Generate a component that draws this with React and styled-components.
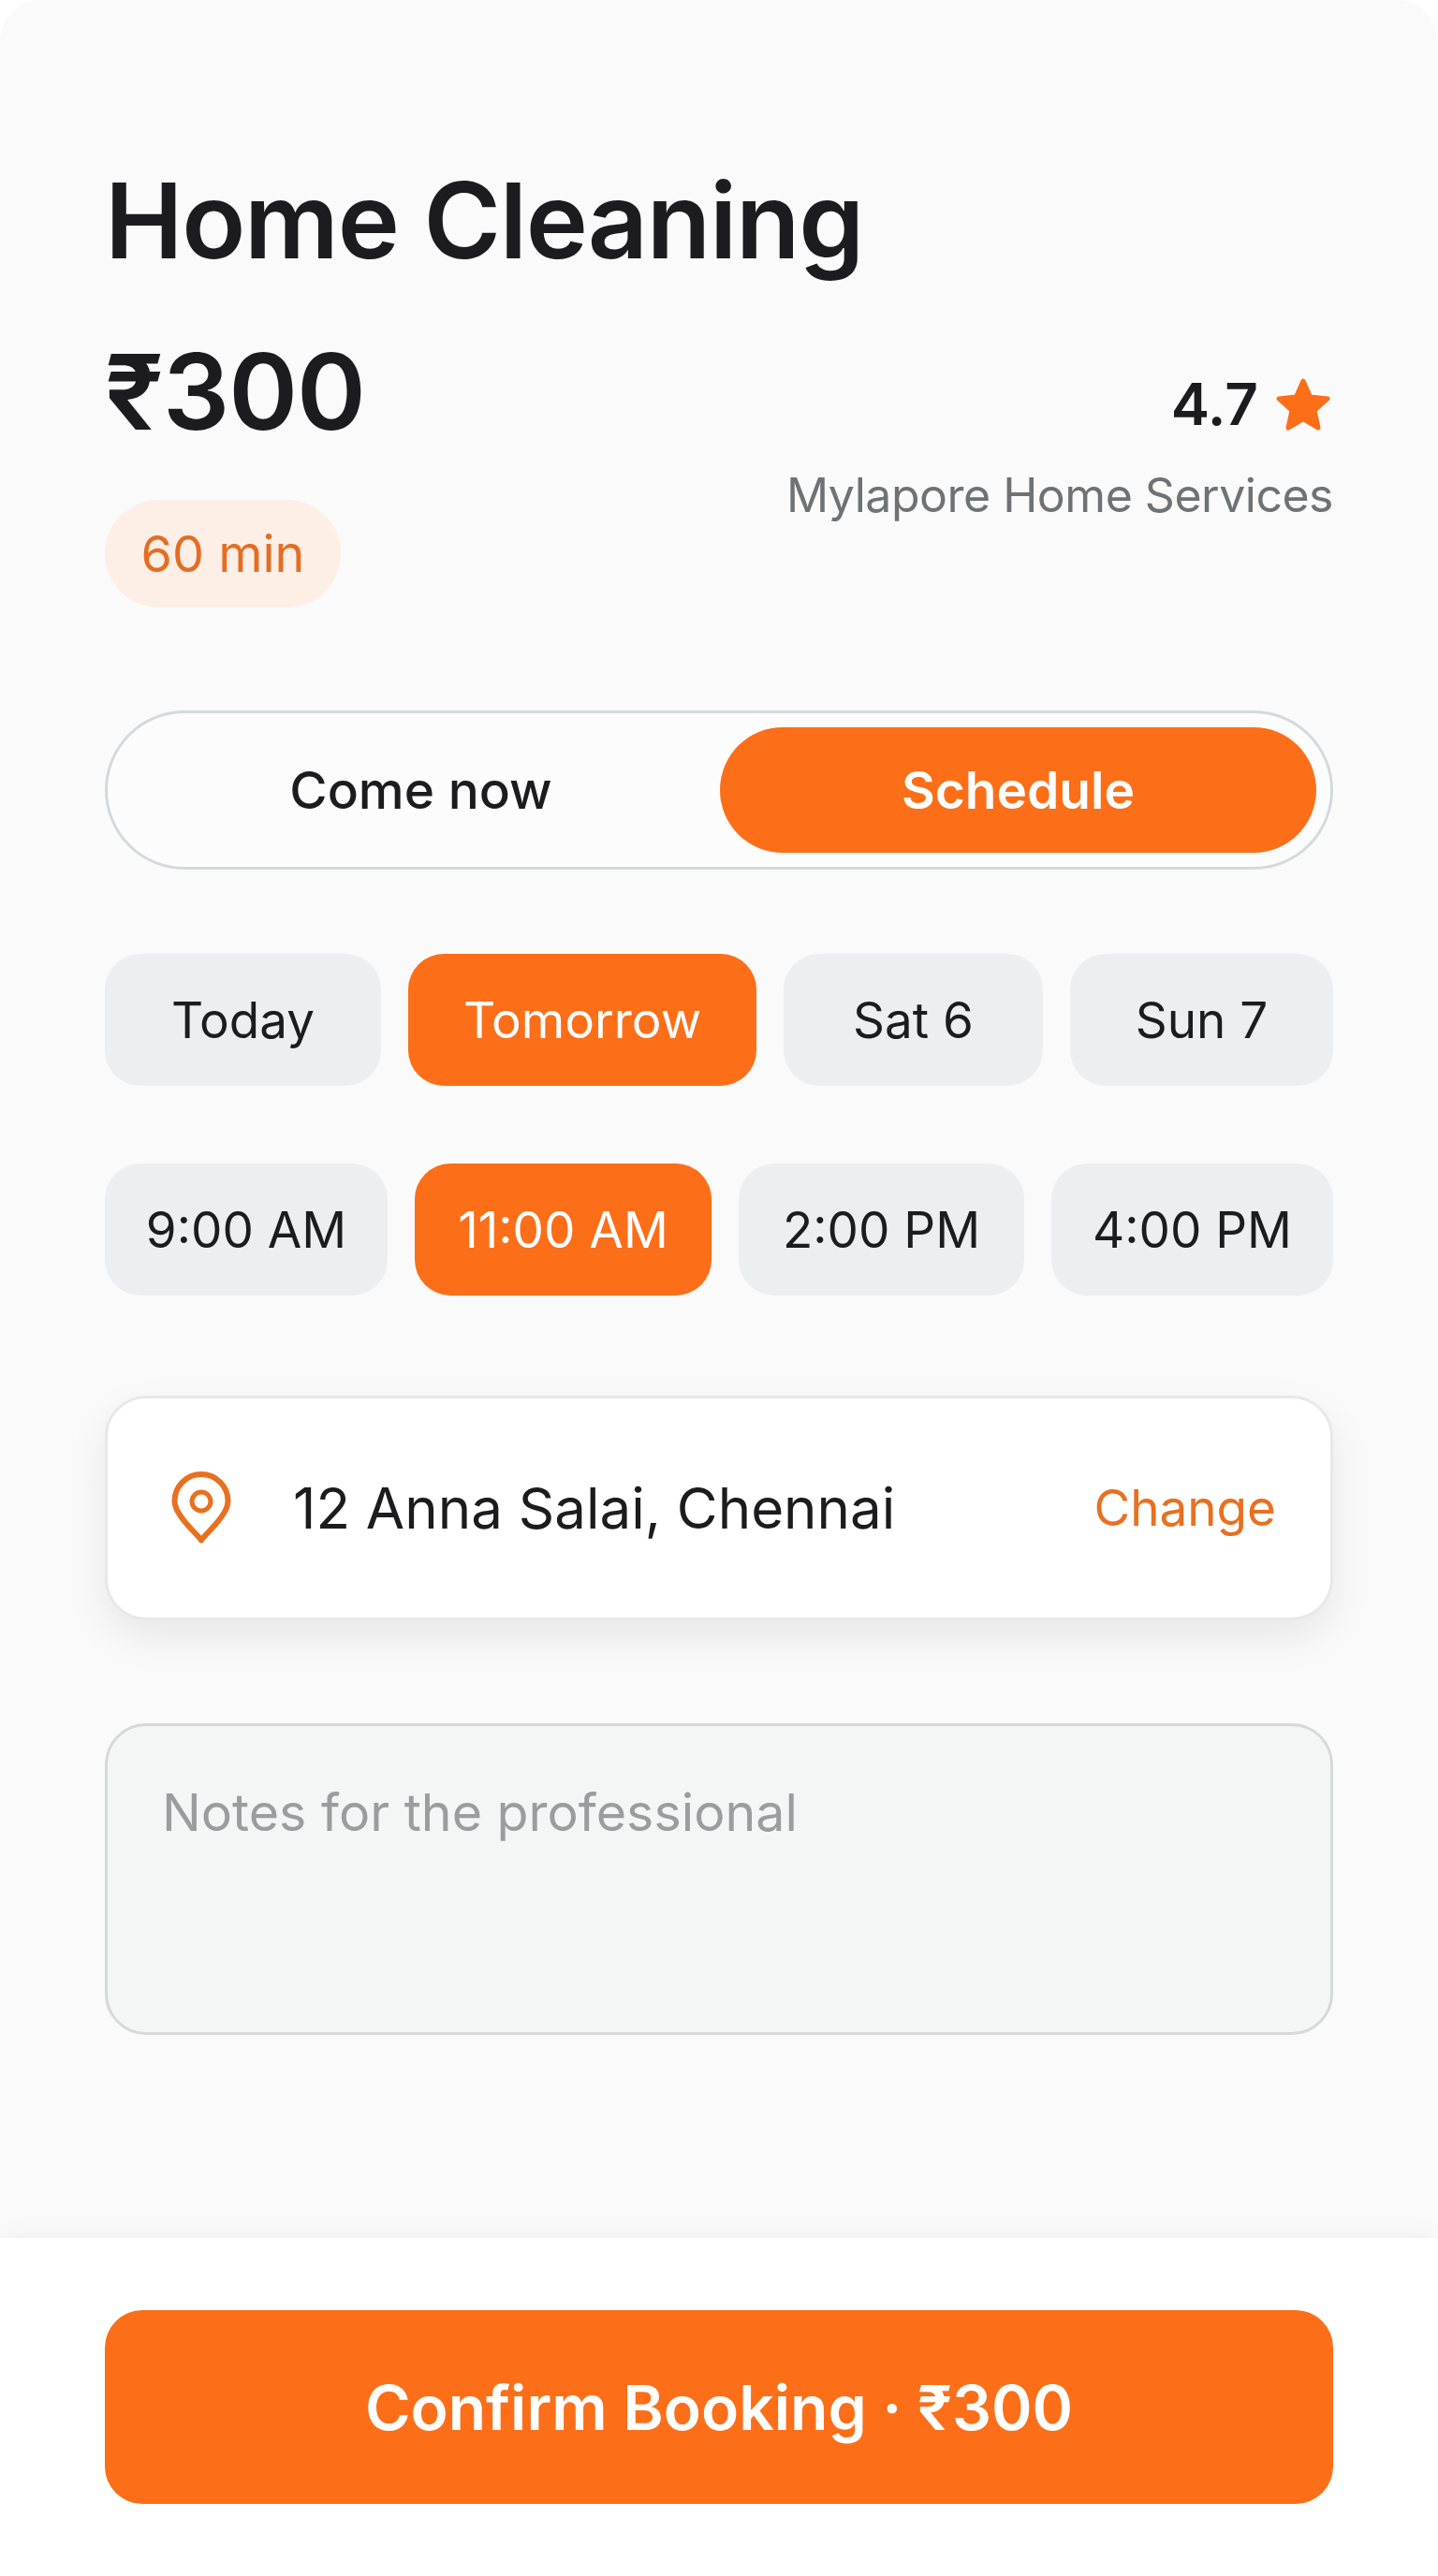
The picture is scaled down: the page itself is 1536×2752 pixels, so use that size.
import React from "react";
import styled, { createGlobalStyle } from "styled-components";

const orange = "#fc6e17";
const ink = "#1c1c1e";

const GlobalStyle = createGlobalStyle`
  html, body {
    margin: 0;
    padding: 0;
    background: #ffffff;
  }
  * {
    box-sizing: border-box;
  }
`;

const Screen = styled.div`
  width: 1536px;
  height: 2752px;
  display: flex;
  flex-direction: column;
  font-family: "Inter", "Liberation Sans", sans-serif;
  color: ${ink};
  background: #fafafa;
  border-radius: 44px 44px 0 0;
  overflow: hidden;
`;

const Main = styled.main`
  flex: 1;
  padding: 170px 112px 0;
  display: flex;
  flex-direction: column;
`;

const Title = styled.h1`
  margin: 0;
  font-size: 112px;
  line-height: 130px;
  font-weight: 600;
  letter-spacing: -1.3px;
`;

const Summary = styled.div`
  margin-top: 53px;
  display: flex;
  justify-content: space-between;
  align-items: flex-start;
`;

const PriceColumn = styled.div`
  display: flex;
  flex-direction: column;
  align-items: flex-start;
`;

const Price = styled.div`
  font-size: 112px;
  line-height: 130px;
  font-weight: 600;
  letter-spacing: -1px;
`;

const Duration = styled.span`
  margin-top: 51px;
  width: 252px;
  height: 115px;
  display: flex;
  align-items: center;
  justify-content: center;
  border-radius: 58px;
  background: #fdeee6;
  color: #e56d22;
  font-size: 54px;
`;

const ProviderColumn = styled.div`
  padding-top: 41px;
  display: flex;
  flex-direction: column;
  align-items: flex-end;
`;

const Rating = styled.div`
  padding-right: 2px;
  display: flex;
  align-items: center;
  gap: 18px;
  font-size: 62px;
  line-height: 76px;
  font-weight: 600;
`;

const Provider = styled.div`
  margin-top: 27px;
  font-size: 50px;
  line-height: 64px;
  letter-spacing: -0.5px;
  color: #6f7274;
`;

const Toggle = styled.div`
  margin-top: 110px;
  height: 170px;
  padding: 15px;
  display: grid;
  grid-template-columns: 1fr 637px;
  border: 3px solid #d5d9db;
  border-radius: 85px;
  background: #fcfcfc;
`;

const ToggleOption = styled.button`
  border: none;
  border-radius: 68px;
  font-family: inherit;
  font-size: 55px;
  font-weight: ${(p) => (p.$active ? 600 : 500)};
  color: ${(p) => (p.$active ? "#ffffff" : ink)};
  background: ${(p) => (p.$active ? orange : "transparent")};
`;

const ChipRow = styled.div`
  margin-top: ${(p) => p.$gap}px;
  display: grid;
  grid-template-columns: ${(p) => p.$columns};
  gap: 29px;
`;

const Chip = styled.button`
  height: 141px;
  border: none;
  border-radius: 38px;
  font-family: inherit;
  font-size: 53px;
  color: ${(p) => (p.$active ? "#ffffff" : ink)};
  background: ${(p) => (p.$active ? orange : "#eceef0")};
`;

const AddressCard = styled.div`
  margin-top: 107px;
  height: 240px;
  padding: 0 58px 0 68px;
  display: flex;
  align-items: center;
  background: #ffffff;
  border: 3px solid #e6e8e9;
  border-radius: 44px;
  box-shadow: 0 18px 44px rgba(0, 0, 0, 0.08);
`;

const Address = styled.div`
  margin-left: 66px;
  flex: 1;
  font-size: 60px;
`;

const ChangeLink = styled.span`
  font-size: 53px;
  color: #e8701f;
`;

const Notes = styled.div`
  margin-top: 110px;
  height: 333px;
  padding: 58px 58px 0;
  background: #f4f5f5;
  border: 3px solid #d6d8da;
  border-radius: 44px;
  font-size: 55.5px;
  line-height: 68px;
  color: #9a9c9e;
`;

const Footer = styled.footer`
  height: 361px;
  padding: 77px 112px 0;
  background: #ffffff;
  box-shadow: 0 0 24px rgba(0, 0, 0, 0.06);
`;

const ConfirmButton = styled.button`
  width: 100%;
  height: 207px;
  border: none;
  border-radius: 40px;
  font-family: inherit;
  font-size: 66px;
  font-weight: 600;
  color: #ffffff;
  background: ${orange};
`;

const StarIcon = () => (
  <svg width="60" height="58" viewBox="0 0 60 58" aria-hidden="true">
    <path
      d="M30 4 L37.5 21 L56 23 L42 35.5 L46 54 L30 44.5 L14 54 L18 35.5 L4 23 L22.5 21 Z"
      fill={orange}
      stroke={orange}
      strokeWidth="5"
      strokeLinejoin="round"
    />
  </svg>
);

const PinIcon = () => (
  <svg width="64" height="78" viewBox="0 0 64 78" fill="none" aria-hidden="true">
    <path
      d="M32 73.5 C27 66 3.5 47 3.5 31.5 A28.5 28.5 0 0 1 60.5 31.5 C60.5 47 37 66 32 73.5 Z"
      stroke="#e8701f"
      strokeWidth="6"
      strokeLinejoin="round"
    />
    <circle cx="32" cy="32" r="10" stroke="#e8701f" strokeWidth="5" />
  </svg>
);

const dates = ["Today", "Tomorrow", "Sat 6", "Sun 7"];
const times = ["9:00 AM", "11:00 AM", "2:00 PM", "4:00 PM"];

const App = () => {
  return (
    <Screen>
      <GlobalStyle />
      <Main>
        <Title>Home Cleaning</Title>
        <Summary>
          <PriceColumn>
            <Price>₹300</Price>
            <Duration>60 min</Duration>
          </PriceColumn>
          <ProviderColumn>
            <Rating>
              4.7
              <StarIcon />
            </Rating>
            <Provider>Mylapore Home Services</Provider>
          </ProviderColumn>
        </Summary>

        <Toggle>
          <ToggleOption>Come now</ToggleOption>
          <ToggleOption $active>Schedule</ToggleOption>
        </Toggle>

        <ChipRow $gap={90} $columns="295fr 372fr 277fr 281fr">
          {dates.map((d) => (
            <Chip key={d} $active={d === "Tomorrow"}>
              {d}
            </Chip>
          ))}
        </ChipRow>

        <ChipRow $gap={83} $columns="302fr 317fr 305fr 301fr">
          {times.map((t) => (
            <Chip key={t} $active={t === "11:00 AM"}>
              {t}
            </Chip>
          ))}
        </ChipRow>

        <AddressCard>
          <PinIcon />
          <Address>12 Anna Salai, Chennai</Address>
          <ChangeLink>Change</ChangeLink>
        </AddressCard>

        <Notes>Notes for the professional</Notes>
      </Main>

      <Footer>
        <ConfirmButton>Confirm Booking · ₹300</ConfirmButton>
      </Footer>
    </Screen>
  );
};

export default App;
